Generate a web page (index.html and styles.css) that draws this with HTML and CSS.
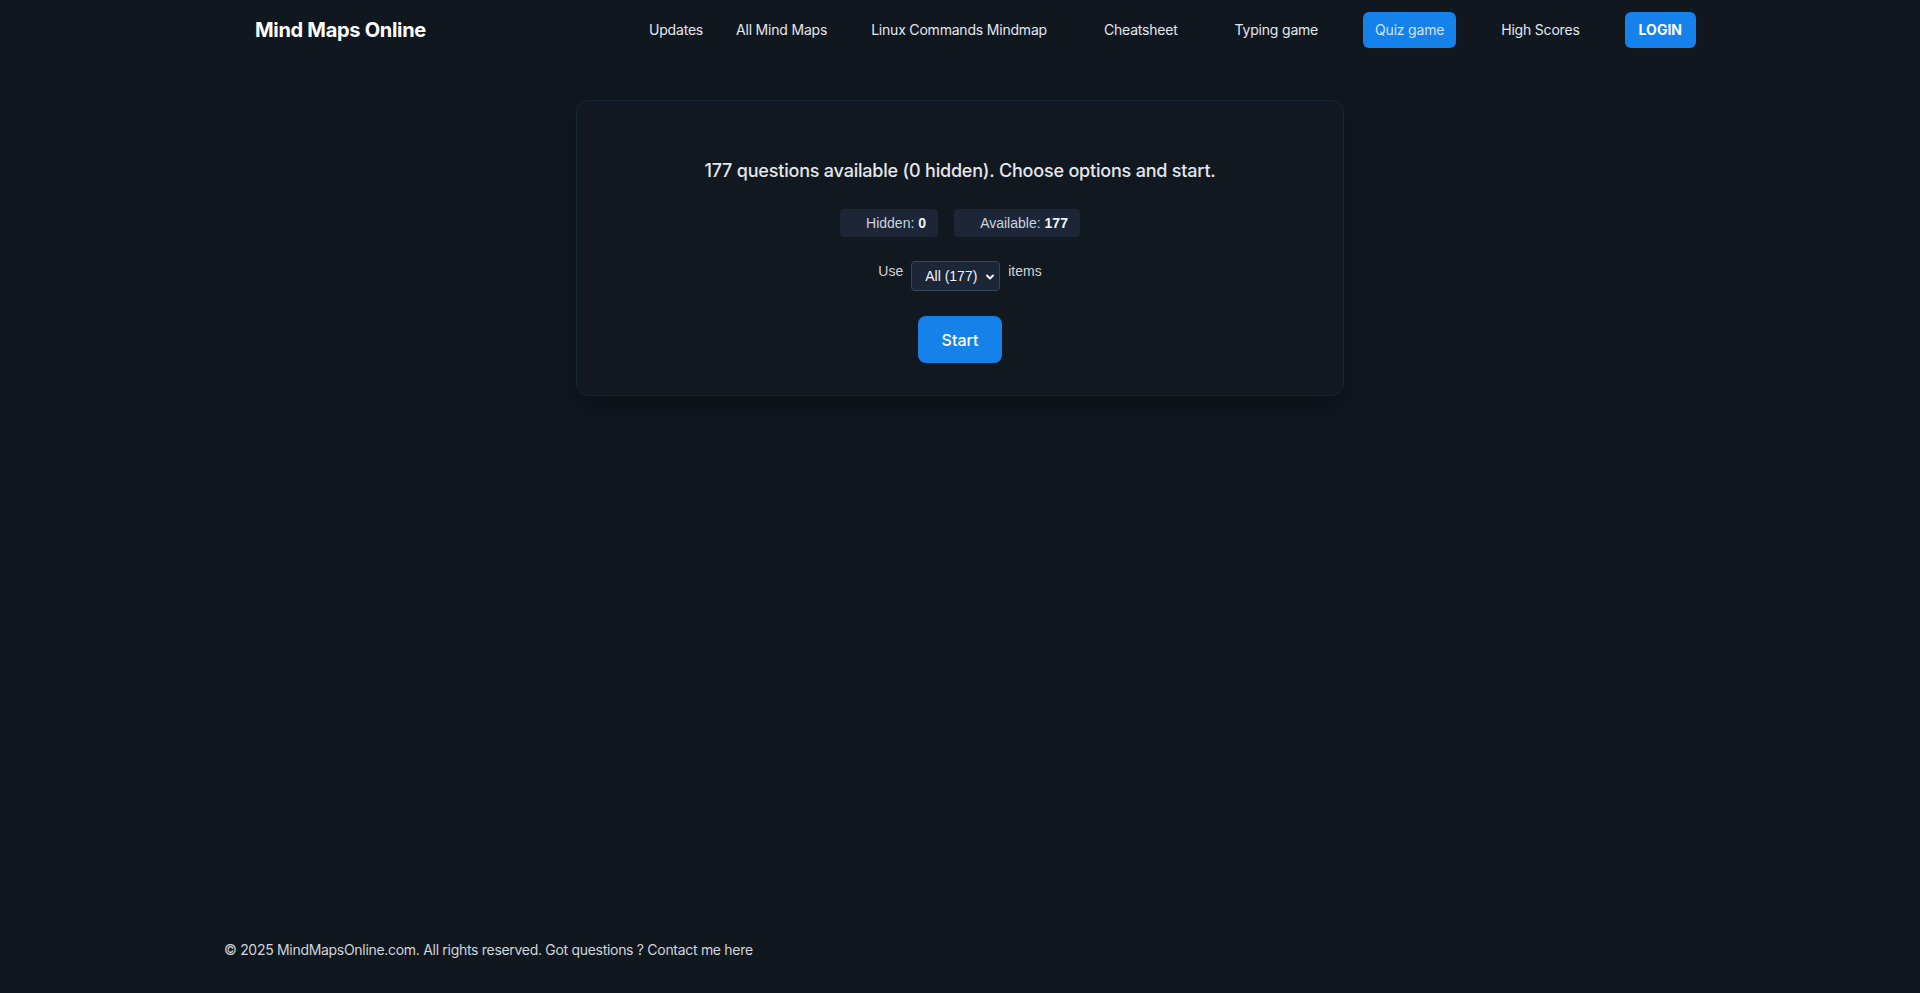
FILE: index.html
```html
<!DOCTYPE html>
<html lang="en">
<head>
    <meta charset="UTF-8">
    <title>Quiz game - Mind Maps Online</title>
    <meta name="viewport" content="width=device-width, initial-scale=1.0">
    <link rel="stylesheet" href="styles.css">
</head>
<body>

<header class="site-header">
    <div class="header-inner">
        <a href="#" class="logo">Mind Maps Online</a>
        <nav class="main-nav">
            <a href="#" class="nav-link">Updates</a>
            <a href="#" class="nav-link">All Mind Maps</a>
            <a href="#" class="nav-link">Linux Commands Mindmap</a>
            <a href="#" class="nav-link">Cheatsheet</a>
            <a href="#" class="nav-link">Typing game</a>
            <a href="#" class="nav-link active">Quiz game</a>
            <a href="#" class="nav-link">High Scores</a>
            <a href="#" class="login-btn">LOGIN</a>
        </nav>
    </div>
</header>

<main class="page">
    <section class="quiz-card">
        <p class="quiz-intro">177 questions available (0 hidden). Choose options and start.</p>

        <div class="stats">
            <span class="stat-chip"><span class="stat-icon"></span>Hidden: <b>0</b></span>
            <span class="stat-chip"><span class="stat-icon"></span>Available: <b>177</b></span>
        </div>

        <div class="count-row">
            <label for="itemCount">Use</label>
            <span class="select-wrap">
                <select id="itemCount" name="itemCount">
                    <option value="all">All (177)</option>
                    <option value="10">10</option>
                    <option value="25">25</option>
                    <option value="50">50</option>
                </select>
                <svg class="select-arrow" width="10" height="10" viewBox="0 0 10 10">
                    <path d="M2 3.5 L5 6.5 L8 3.5" fill="none" stroke="#f1f5f9" stroke-width="2" stroke-linecap="round" stroke-linejoin="round"/>
                </svg>
            </span>
            <span>items</span>
        </div>

        <button type="button" class="start-btn">Start</button>
    </section>
</main>

<footer class="site-footer">
    <p>&copy; 2025 MindMapsOnline.com. All rights reserved. Got questions ? <a href="#">Contact me here</a></p>
</footer>

</body>
</html>
```

FILE: styles.css
```css
body {
    font-family: Inter, "Noto Sans", sans-serif;
    background-color: #10171f;
    color: #e5e7eb;
    margin: 0;
    min-height: 100vh;
    display: flex;
    flex-direction: column;
}
a {
    color: inherit;
    text-decoration: none;
}

/* Header */
.site-header {
    height: 60px;
}
.header-inner {
    max-width: 1472px;
    height: 100%;
    margin: 0 auto;
    display: flex;
    align-items: center;
    justify-content: space-between;
}
.logo {
    padding-left: 31px;
    font-size: 20px;
    font-weight: 700;
    color: #fff;
    letter-spacing: -0.3px;
}
.main-nav {
    display: flex;
    align-items: center;
    gap: 33px;
}
.nav-link {
    font-size: 14px;
    line-height: 20px;
    padding: 8px 12px;
    border-radius: 6px;
    color: #e2e8f0;
    letter-spacing: -0.2px;
}
/* first links sit closer together */
.nav-link:nth-child(2) {
    margin-left: -24px;
}
.nav-link:nth-child(3) {
    margin-left: -13px;
}
.nav-link.active {
    background-color: #1482ea;
    color: #d2e3f5;
}
.login-btn {
    font-size: 14px;
    line-height: 20px;
    font-weight: 700;
    padding: 8px 14px;
    border-radius: 6px;
    background-color: #1482ea;
    color: #fff;
}

/* Quiz card */
.page {
    flex: 1;
}
.quiz-card {
    max-width: 702px;
    margin: 40px auto 0;
    padding: 56px 32px 32px;
    border: 1px solid #15263a;
    border-radius: 13px;
    background-color: #111820;
    box-shadow: 0 12px 24px rgba(0, 0, 0, 0.25);
    display: flex;
    flex-direction: column;
    align-items: center;
}
.quiz-intro {
    margin: 0 0 24px;
    font-size: 18px;
    line-height: 28px;
    font-weight: 500;
    color: #e5e7eb;
    letter-spacing: -0.2px;
}
.stats {
    display: flex;
    gap: 16px;
    margin-bottom: 24px;
}
.stat-chip {
    display: flex;
    align-items: center;
    height: 28px;
    padding: 0 12px;
    border-radius: 4px;
    background-color: #1c2637;
    font-family: "Liberation Sans", Arial, sans-serif;
    font-size: 14px;
    color: #cbd5e1;
}
.stat-chip b {
    color: #f1f5f9;
    margin-left: 4px;
}
.stat-icon {
    width: 14px;
}
.count-row {
    display: flex;
    align-items: flex-start;
    gap: 8px;
    margin-bottom: 25px;
    font-family: "Liberation Sans", Arial, sans-serif;
    font-size: 14px;
    line-height: 20px;
    color: #d1d5db;
}
.select-wrap {
    position: relative;
    display: block;
}
.select-wrap select {
    appearance: none;
    width: 89px;
    height: 30px;
    padding: 0 20px 0 13px;
    border: 1px solid #36445a;
    border-radius: 4px;
    background-color: #1c2637;
    color: #f1f5f9;
    font-family: "Liberation Sans", Arial, sans-serif;
    font-size: 14px;
}
.select-arrow {
    position: absolute;
    right: 5px;
    top: 11px;
    pointer-events: none;
}
.start-btn {
    background-color: #1582ea;
    color: #fff;
    border: none;
    border-radius: 8px;
    padding: 0 24px;
    height: 47px;
    font-family: Inter, sans-serif;
    font-size: 16px;
    font-weight: 500;
    cursor: pointer;
}

/* Footer */
.site-footer {
    max-width: 1472px;
    width: 100%;
    margin: 0 auto;
    padding: 0 0 33px;
}
.site-footer p {
    margin: 0;
    font-size: 14px;
    line-height: 20px;
    color: #d1d5db;
    letter-spacing: -0.3px;
}
```
